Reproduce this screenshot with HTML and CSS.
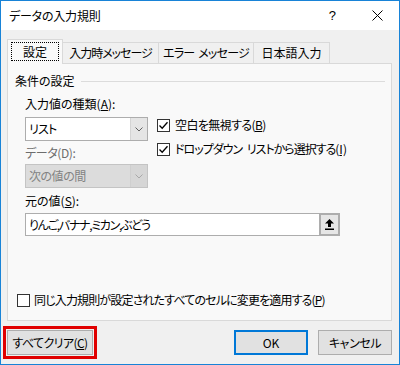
FILE: index.html
```html
<!DOCTYPE html>
<html lang="ja">
<head>
<meta charset="utf-8">
<link rel="stylesheet" href="styles.css">
</head>
<body>
<div class="win">
  <div class="titlebar">
    <span class="title">データの入力規則</span>
    <span class="help">?</span>
    <svg class="close" width="11" height="11" viewBox="0 0 11 11"><path d="M0.5 0.5 L10.5 10.5 M10.5 0.5 L0.5 10.5" stroke="#000" stroke-width="1" fill="none"/></svg>
  </div>
  <div class="tabs">
    <div class="tab tab-sel w1"><span class="focus">設定</span></div>
    <div class="tab w2">入力時メッセージ</div>
    <div class="tab w3">エラー メッセージ</div>
    <div class="tab w4">日本語入力</div>
  </div>
  <div class="panel">
    <div class="group-head"><span>条件の設定</span><span class="rule"></span></div>
    <div class="top-row">
      <div class="left-col">
        <div class="lbl l1">入力値の種類(<u>A</u>):</div>
        <div class="sel s1">
          <span class="sel-text">リスト</span>
          <span class="sel-btn"><svg width="8" height="5" viewBox="0 0 8 5"><path d="M0.5 0.5 L4 4 L7.5 0.5" stroke="#606060" fill="none" stroke-width="1"/></svg></span>
        </div>
        <div class="lbl l2 dis">データ(D):</div>
        <div class="sel s2 sel-dis">
          <span class="sel-text">次の値の間</span>
          <span class="sel-btn"><svg width="8" height="5" viewBox="0 0 8 5"><path d="M0.5 0.5 L4 4 L7.5 0.5" stroke="#a8a8a8" fill="none" stroke-width="1"/></svg></span>
        </div>
      </div>
      <div class="right-col">
        <div class="chk-row c1">
          <span class="box"><svg width="11" height="11" viewBox="0 0 11 11"><path d="M1.5 5.5 L4.2 8.3 L9.5 2.3" stroke="#000" stroke-width="1.3" fill="none"/></svg></span>
          <span class="t1">空白を無視する(<u>B</u>)</span>
        </div>
        <div class="chk-row c2">
          <span class="box"><svg width="11" height="11" viewBox="0 0 11 11"><path d="M1.5 5.5 L4.2 8.3 L9.5 2.3" stroke="#000" stroke-width="1.3" fill="none"/></svg></span>
          <span class="t2">ドロップダウン リストから選択する(<u>I</u>)</span>
        </div>
      </div>
    </div>
    <div class="lbl l3">元の値(<u>S</u>):</div>
    <div class="src">
      <span class="src-text">りんご,バナナ,ミカン,ぶどう</span>
      <span class="pick"><svg width="9" height="11" viewBox="0 0 9 11"><path d="M4.5 0 L9 4.5 L6 4.5 L6 8 L3 8 L3 4.5 L0 4.5 Z" fill="#000"/><rect x="0" y="9.5" width="9" height="1.5" fill="#000"/></svg></span>
    </div>
    <div class="chk-row bottom-chk">
      <span class="box"></span>
      <span class="t3">同じ入力規則が設定されたすべてのセルに変更を適用する(<u>P</u>)</span>
    </div>
  </div>
  <div class="buttons">
    <div class="btn clear">すべてクリア(<u>C</u>)</div>
    <div class="btn ok">OK</div>
    <div class="btn cancel">キャンセル</div>
  </div>
</div>
</body>
</html>
```
FILE: styles.css
```css
html, body {
  margin: 0;
  padding: 0;
  background: #f0f0f0;
}
.win {
  width: 400px;
  height: 365px;
  box-sizing: border-box;
  border: 1px solid #1883d7;
  background: #f0f0f0;
  display: flex;
  flex-direction: column;
  font-family: "Noto Sans CJK JP", "Noto Sans", sans-serif;
  font-size: 12px;
  font-feature-settings: "palt";
  color: #000;
  overflow: hidden;
}
.titlebar {
  height: 29px;
  background: #fff;
  display: flex;
  align-items: center;
  padding-left: 8px;
  flex-shrink: 0;
}
.title {
  flex: 1;
  line-height: 16px;
  letter-spacing: -0.2px;
}
.help {
  font-family: "Liberation Sans", sans-serif;
  font-size: 13px;
  margin-right: 36px;
  line-height: 16px;
}
.close {
  margin-right: 16px;
}
.tabs {
  display: flex;
  align-items: flex-start;
  margin: 9px 0 0 6px;
  height: 25px;
  position: relative;
  z-index: 1;
  flex-shrink: 0;
}
.tab {
  box-sizing: border-box;
  height: 22px;
  margin-top: 3px;
  border: 1px solid #d9d9d9;
  background: #f0f0f0;
  display: flex;
  align-items: center;
  justify-content: center;
  margin-left: -1px;
  line-height: 16px;
  white-space: nowrap;
}
.tab-sel {
  height: 25px;
  margin-top: 0;
  margin-left: 0;
  border-bottom: none;
  background: #f9f9f9;
  position: relative;
  z-index: 2;
  align-items: flex-start;
  padding-top: 2px;
}
.focus {
  box-sizing: border-box;
  width: 48px;
  height: 19px;
  border: 1px dotted #000;
  display: flex;
  align-items: center;
  justify-content: center;
}
.w1 { width: 56px; }
.w2 { width: 97px; letter-spacing: -1px; }
.w3 { width: 96px; letter-spacing: -0.8px; word-spacing: 2px; }
.w4 { width: 77px; }
.panel {
  box-sizing: border-box;
  margin: -1px 0 0 6px;
  width: 385px;
  height: 258px;
  border: 1px solid #d9d9d9;
  background: #f9f9f9;
  display: flex;
  flex-direction: column;
  padding-bottom: 12px;
  flex-shrink: 0;
}
.group-head {
  display: flex;
  align-items: center;
  height: 16px;
  margin: 9px 6px 0 7px;
  line-height: 16px;
}
.rule {
  flex: 1;
  height: 1px;
  background: #dcdcdc;
  margin-left: 6px;
}
.top-row {
  display: flex;
  margin-left: 17px;
}
.left-col {
  width: 123px;
  display: flex;
  flex-direction: column;
}
.lbl {
  line-height: 16px;
  height: 16px;
  white-space: nowrap;
}
.l1 { margin-top: 7px; }
.l2 { margin-top: 4px; letter-spacing: -0.4px; }
.l3 { margin-top: 5px; margin-left: 17px; }
.dis { color: #6d6d6d; }
.sel {
  box-sizing: border-box;
  height: 24px;
  border: 1px solid #adadad;
  background: #fff;
  display: flex;
}
.s1 { margin-top: 5px; }
.s1 .sel-text { letter-spacing: -0.8px; }
.s2 { margin-top: 3px; }
.s2 .sel-text { letter-spacing: -0.5px; }
.sel-text {
  flex: 1;
  padding-left: 3px;
  line-height: 22px;
}
.sel-btn {
  width: 16px;
  background: #e5e5e5;
  border-left: 1px solid #d4d4d4;
  display: flex;
  align-items: center;
  justify-content: center;
}
.sel-dis {
  background: #dcdcdc;
  border-color: #c4c4c4;
  color: #838383;
}
.sel-dis .sel-btn {
  background: #d6d6d6;
  border-left-color: #cfcfcf;
}
.right-col {
  margin-left: 9px;
  display: flex;
  flex-direction: column;
}
.chk-row {
  display: flex;
  align-items: center;
  height: 16px;
  line-height: 16px;
  white-space: nowrap;
}
.c1 { margin-top: 28px; }
.c2 { margin-top: 8px; }
.t1 { letter-spacing: -0.6px; }
.t2 { letter-spacing: -1px; word-spacing: 3px; }
.t2 u { margin-left: 1px; margin-right: 1px; }
.t3 { letter-spacing: -0.85px; }
.box {
  box-sizing: border-box;
  width: 13px;
  height: 13px;
  border: 1px solid #333;
  background: #fff;
  margin-right: 5px;
  display: flex;
  align-items: center;
  justify-content: center;
  flex-shrink: 0;
}
.src {
  box-sizing: border-box;
  margin: 4px 0 0 17px;
  width: 315px;
  height: 23px;
  border: 1px solid #adadad;
  background: #fff;
  display: flex;
}
.src-text {
  flex: 1;
  padding-left: 3px;
  line-height: 21px;
  white-space: nowrap;
  letter-spacing: -1.3px;
}
.pick {
  box-sizing: border-box;
  width: 21px;
  margin: -1px -1px -1px 0;
  border: 2px solid #adadad;
  background: #e6e6e6;
  display: flex;
  align-items: center;
  justify-content: center;
}
.bottom-chk {
  margin-top: auto;
  margin-left: 9px;
}
.bottom-chk .box {
  margin-right: 4px;
}
.buttons {
  display: flex;
  margin: 9px 7px 0 6px;
  height: 25px;
  flex-shrink: 0;
}
.btn {
  box-sizing: border-box;
  height: 25px;
  width: 74px;
  border: 1px solid #adadad;
  background: #e1e1e1;
  display: flex;
  align-items: center;
  justify-content: center;
  line-height: 16px;
  white-space: nowrap;
}
.clear {
  width: 86px;
  outline: 3px solid #e00000;
  outline-offset: 1px;
  letter-spacing: -0.6px;
}
.ok {
  margin-left: auto;
  border: 2px solid #0078d7;
}
.cancel {
  margin-left: 10px;
  letter-spacing: -0.4px;
}
```
